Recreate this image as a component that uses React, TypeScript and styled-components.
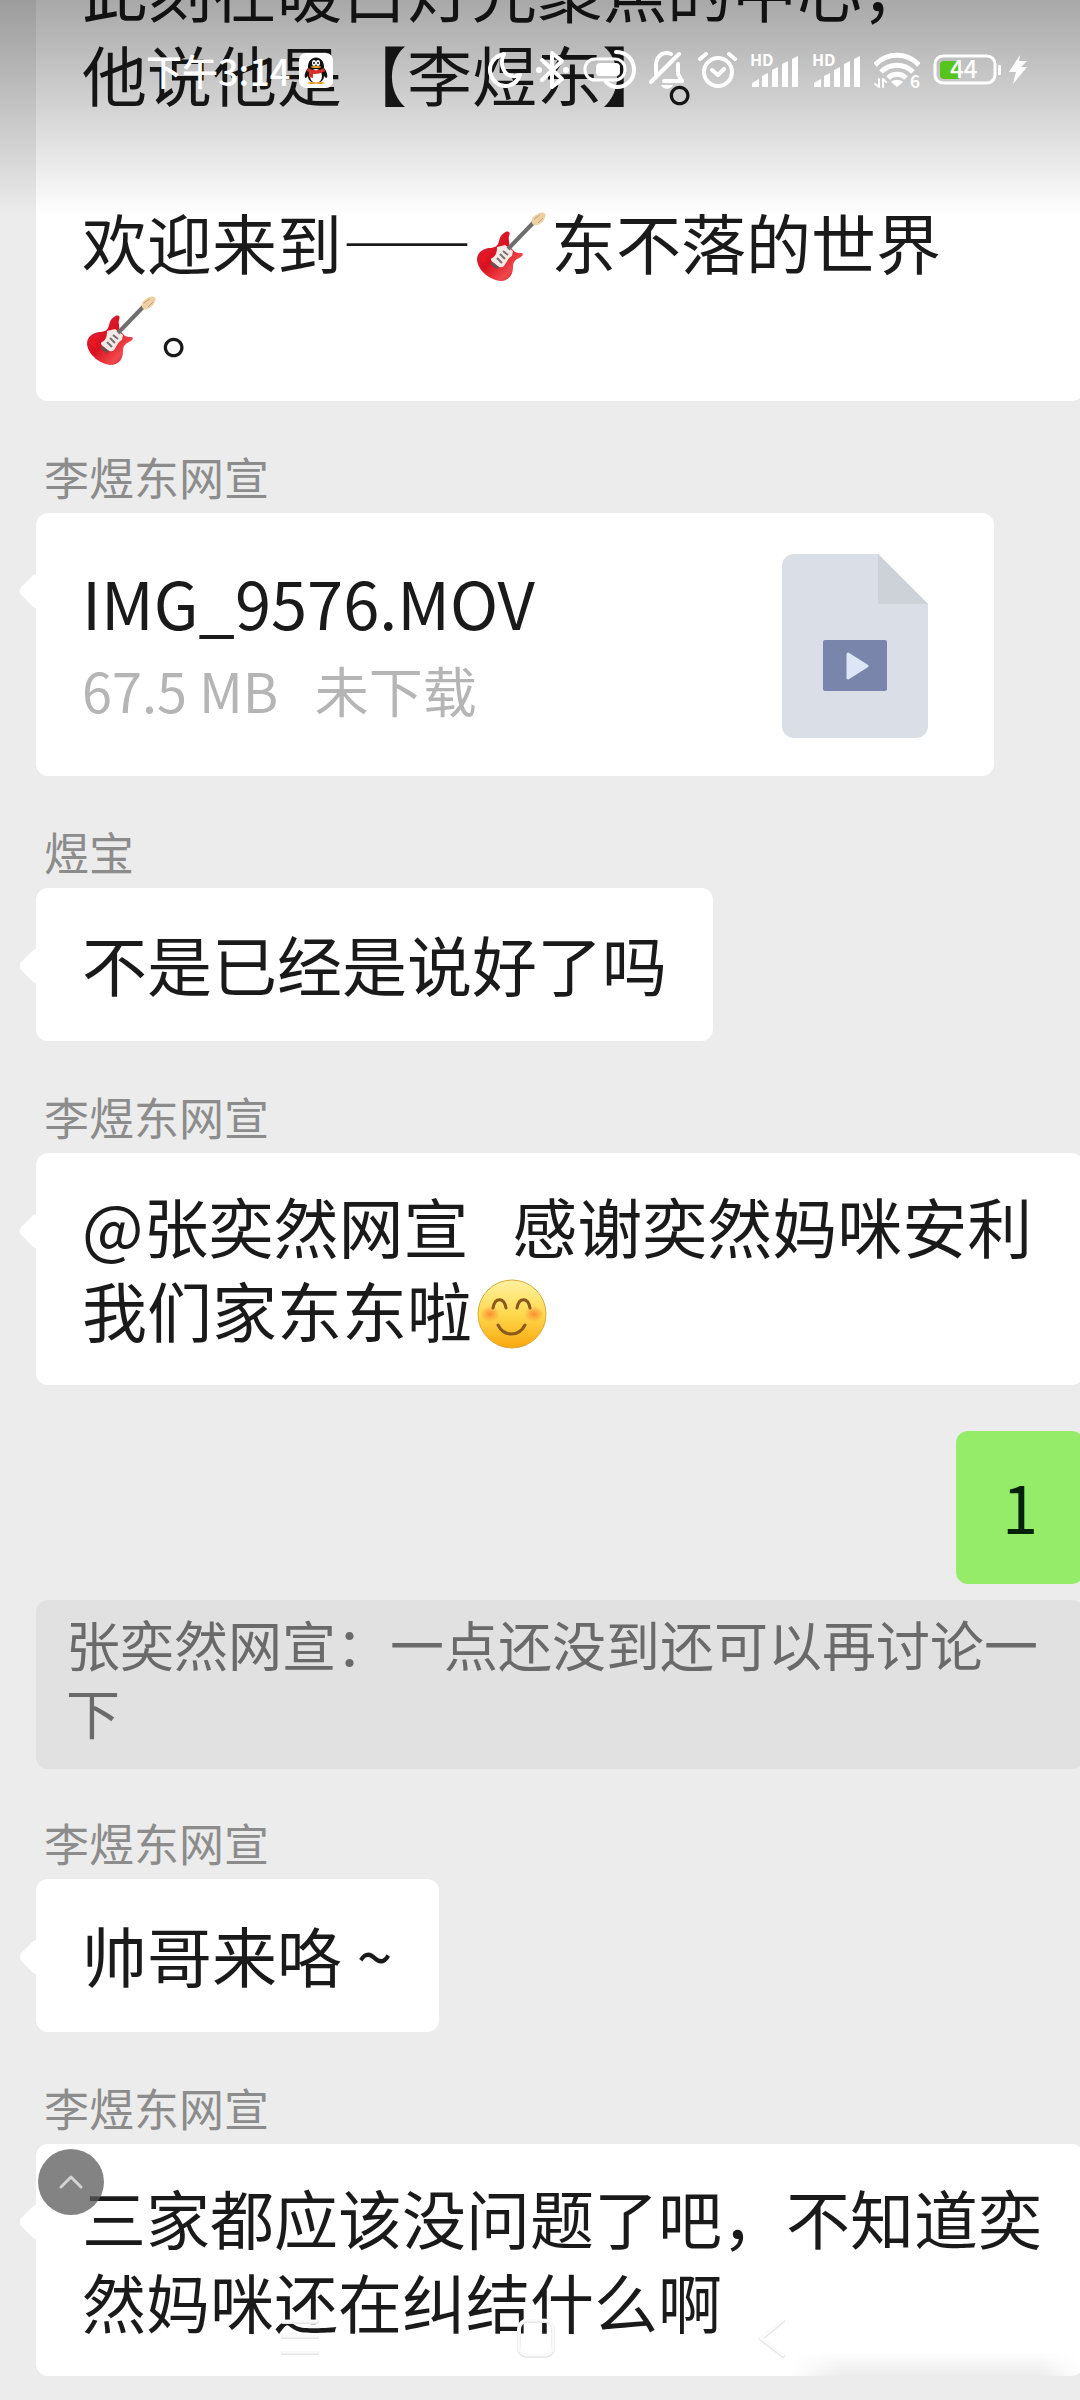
import React from "react";
import styled, { createGlobalStyle } from "styled-components";

const GlobalStyle = createGlobalStyle`
  * { box-sizing: border-box; }
  body {
    margin: 0;
    background: #ececec;
    font-family: "Noto Sans CJK SC", "Noto Sans", sans-serif;
  }
  button { padding: 0; border: 0; background: none; font: inherit; }
  svg { display: block; }
`;

const Screen = styled.main`
  position: relative;
  overflow: hidden;
  min-height: 100vh;
  background: #ececec;
  text-spacing-trim: space-all;
`;

/* The thread is scrolled part of the way down and runs past the right edge. */
const Thread = styled.ol`
  list-style: none;
  display: flex;
  flex-direction: column;
  align-items: flex-start;
  margin: -83px -4px 0 0;
  padding: 0 0 24px 36px;
`;

const Message = styled.li<{ $gap: number; $wide?: boolean }>`
  display: flex;
  flex-direction: column;
  align-items: flex-start;
  margin-top: ${(p) => p.$gap}px;
  width: ${(p) => (p.$wide ? "100%" : "auto")};
`;

const OwnMessage = styled(Message)`
  align-self: flex-end;
`;

const Sender = styled.span`
  padding-left: 8px;
  font-size: 45px;
  line-height: 72px;
  color: #8c8c8c;
`;

const Bubble = styled.div<{ $own?: boolean; $tail?: boolean; $wide?: boolean; $size?: number }>`
  position: relative;
  display: flex;
  flex-direction: column;
  justify-content: center;
  width: ${(p) => (p.$wide ? "100%" : "auto")};
  min-height: 153px;
  padding: 30px 46px 34px;
  border-radius: 12px;
  background: ${(p) => (p.$own ? "#95ec69" : "#ffffff")};
  color: ${(p) => (p.$own ? "#06210a" : "#1a1a1a")};
  font-size: ${(p) => p.$size ?? 65}px;
  line-height: 84px;
  white-space: pre;

  &::before {
    content: "";
    display: ${(p) => (p.$tail ? "block" : "none")};
    position: absolute;
    left: -13px;
    top: 64px;
    width: 28px;
    height: 28px;
    border-radius: 6px;
    background: inherit;
    transform: rotate(45deg);
  }
`;

const Line = styled.span`
  display: block;
  height: 84px;
`;

const Dash = styled.span`
  font-variant-east-asian: full-width;
`;

const FileCard = styled(Bubble)`
  flex-direction: row;
  align-items: center;
  justify-content: space-between;
  width: 958px;
  padding: 41px 66px 38px 46px;
`;

const FileText = styled.div`
  display: flex;
  flex-direction: column;
  gap: 4px;
`;

const FileMeta = styled.span`
  font-size: 54px;
  line-height: 84px;
  color: #b5b5b5;
`;

const Quote = styled.blockquote`
  width: 100%;
  margin: 0;
  padding: 10px 30px 23px;
  border-radius: 12px;
  background: #e1e1e1;
  color: #6a6a6a;
  font-size: 54px;
  line-height: 68px;
  white-space: pre;
`;

const InlineArt = styled.svg`
  display: inline-block;
  width: 70px;
  height: 70px;
  margin: 0 4px 0 5px;
  vertical-align: -12px;
`;

const StatusBar = styled.header`
  position: absolute;
  inset: 0 0 auto 0;
  display: flex;
  align-items: flex-start;
  justify-content: space-between;
  height: 216px;
  padding: 50px 52px 0 146px;
  background: linear-gradient(rgba(0, 0, 0, 0.34), rgba(0, 0, 0, 0.2) 90px, rgba(0, 0, 0, 0));
  color: #ffffff;
`;

const StatusGroup = styled.div<{ $gap: number }>`
  display: flex;
  align-items: center;
  gap: ${(p) => p.$gap}px;
  height: 40px;
`;

const Clock = styled.time`
  font-size: 36px;
  font-weight: 500;
  line-height: 40px;
`;

const ScrollUp = styled.button`
  position: absolute;
  left: 38px;
  bottom: 185px;
  display: grid;
  place-items: center;
  width: 66px;
  height: 66px;
  border-radius: 50%;
  background: rgba(90, 90, 90, 0.75);
`;

const NavBar = styled.nav`
  position: absolute;
  inset: auto 0 40px 0;
  display: flex;
  justify-content: center;
  gap: 194px;
  padding-right: 8px;
`;

const NavButton = styled.button`
  width: 42px;
  height: 44px;
`;

const Haze = styled.div`
  position: absolute;
  right: 0;
  bottom: 24px;
  width: 290px;
  height: 24px;
  background: linear-gradient(rgba(236, 236, 236, 0), #ececec);
  mask-image: linear-gradient(to right, transparent, #000 50px, #000 250px, transparent);
`;

const Guitar = () => (
  <InlineArt viewBox="0 0 70 70" role="img" aria-label="guitar">
    <defs>
      <linearGradient id="body" x1="0" y1="0" x2="1" y2="1">
        <stop offset="0" stopColor="#d8304a" />
        <stop offset="0.45" stopColor="#d9101f" />
        <stop offset="0.75" stopColor="#f0484c" />
        <stop offset="1" stopColor="#b8121c" />
      </linearGradient>
    </defs>
    <path d="M27 22c4-3 7-1 5 3-1 4 1 6 0 10l6 6c2 1 5 1 7 1 2 1 0 4-3 5-4 2-6 4-6 9 0 8-4 13-11 14C14 70 1 60 0 49c0-8 6-11 12-12 6 0 9-2 10-7 1-4 2-6 5-8z" fill="url(#body)" />
    <path d="M4 48c0-5 5-8 10-8-5 3-7 7-5 12-3 0-5-1-5-4z" fill="#ee1420" />
    <path d="M20 36l8-2 8 6-1 5c-4 2-5 6-8 10-3 3-7 0-10-3-3-2-4-4-2-5 4-2 5-6 5-11z" fill="#f3e9e6" />
    <path d="M20 47l5 5M23 43l5 5M26 40l5 4" stroke="#77706f" strokeWidth="2" />
    <path d="M14 52l7 5" stroke="#6b5150" strokeWidth="3" />
    <path d="M31 38L57 11" stroke="#6f6d6e" strokeWidth="4" />
    <path d="M55 12c-1-4 1-6 4-8 3-2 5-3 8-2 2 1 2 2 1 4-1 4-4 7-8 8-2 1-4 0-5-2z" fill="#ecd0a3" />
    <path d="M57 8l6-4M61 12l5-5" stroke="#c99f74" strokeWidth="1" />
  </InlineArt>
);

const Smile = () => (
  <InlineArt viewBox="0 0 70 70" role="img" aria-label="smiling face">
    <defs>
      <linearGradient id="face" x1="0" y1="0" x2="0" y2="1">
        <stop offset="0" stopColor="#fff2a0" />
        <stop offset="0.5" stopColor="#ffd94e" />
        <stop offset="1" stopColor="#f9a60f" />
      </linearGradient>
      <radialGradient id="blush">
        <stop offset="0" stopColor="#f77b2c" stopOpacity="0.8" />
        <stop offset="1" stopColor="#f77b2c" stopOpacity="0" />
      </radialGradient>
    </defs>
    <circle cx="35" cy="35" r="34" fill="url(#face)" stroke="#dfa93a" />
    <ellipse cx="13" cy="35" rx="10" ry="8" fill="url(#blush)" />
    <ellipse cx="57" cy="35" rx="10" ry="8" fill="url(#blush)" />
    <path d="M16 29c2-11 11-11 13 0M40 29c2-11 11-11 13 0M21 46c6 12 21 12 27 0" fill="none" stroke="#8b5a1a" strokeWidth="3" strokeLinecap="round" />
  </InlineArt>
);

const VideoFile = () => (
  <svg width="146" height="184" viewBox="0 0 146 184" aria-hidden="true">
    <path d="M12 0H96L146 50V172a12 12 0 0 1-12 12H12A12 12 0 0 1 0 172V12A12 12 0 0 1 12 0z" fill="#dadfe7" />
    <path d="M96 0L146 50H96z" fill="#cdd1d8" />
    <rect x="41" y="86" width="64" height="51" rx="2" fill="#7985ab" />
    <path d="M66 100L85 112L66 124z" fill="#dde6f6" stroke="#dde6f6" strokeWidth="3" strokeLinejoin="round" />
  </svg>
);

const Penguin = () => (
  <svg width="34" height="35" viewBox="0 0 34 35" role="img" aria-label="QQ">
    <rect width="34" height="35" rx="7" fill="#fff" />
    <path d="M9 15C8 1 26 1 25 15c4 5 4 10 2 10l-2-2c0 4-3 7-8 7s-8-3-8-7l-2 2c-2 0-2-5 2-10z" fill="#111" />
    <ellipse cx="17" cy="23" rx="6" ry="7" fill="#fff" />
    <path d="M9 15c5 3 11 3 16 0l1 3c-5 3-9 3-12 3v4l-4-1v-5l-2-1z" fill="#d5302c" />
    <ellipse cx="15" cy="10" rx="2" ry="3" fill="#fff" />
    <ellipse cx="19" cy="10" rx="2" ry="3" fill="#fff" />
    <circle cx="15" cy="10" r="1" fill="#111" />
    <circle cx="19" cy="10" r="1" fill="#111" />
    <ellipse cx="17" cy="14" rx="5" ry="1" fill="#f0a020" />
    <ellipse cx="13" cy="30" rx="4" ry="1" fill="#e89a20" />
    <ellipse cx="21" cy="30" rx="4" ry="1" fill="#e89a20" />
  </svg>
);

const line = { fill: "none", stroke: "#fff", strokeLinecap: "round", strokeLinejoin: "round" } as const;

const Moon = () => (
  <svg width="34" height="38" viewBox="0 0 34 38" aria-hidden="true">
    <path {...line} strokeWidth="4" d="M16 3C6 5 1 13 2 21c2 9 9 15 17 14 6-1 11-5 13-11-8 3-15 0-17-7-2-5-1-10 1-14z" />
  </svg>
);

const Bluetooth = () => (
  <svg width="35" height="40" viewBox="0 0 35 40" aria-hidden="true">
    <path {...line} strokeWidth="4" d="M7 10L27 29L17 37V3L27 11L7 30" />
    <circle cx="4" cy="20" r="3" fill="#fff" />
    <circle cx="31" cy="20" r="3" fill="#fff" />
  </svg>
);

const DeviceBattery = () => (
  <svg width="53" height="40" viewBox="0 0 53 40" aria-hidden="true">
    <path {...line} strokeWidth="4" d="M33 2C44 2 51 10 51 20S43 37 34 37c-5 0-8-2-11-5" />
    <rect {...line} strokeWidth="3" x="2" y="9" width="40" height="21" rx="10" />
    <rect x="13" y="13" width="24" height="13" rx="4" fill="#fff" />
  </svg>
);

const BellOff = () => (
  <svg width="36" height="40" viewBox="0 0 36 40" aria-hidden="true">
    <path {...line} strokeWidth="4" d="M2 32L30 4M7 24V14C8 5 15 1 22 4M29 14v10l4 7H15" />
    <path d="M12 35h12c-2 5-10 5-12 0z" fill="#fff" />
  </svg>
);

const Alarm = () => (
  <svg width="39" height="38" viewBox="0 0 39 38" aria-hidden="true">
    <circle {...line} strokeWidth="4" cx="20" cy="21" r="14" />
    <path {...line} strokeWidth="4" d="M14 19l6 5 6-6M2 8l6-5M37 8l-6-5" />
  </svg>
);

const Signal = () => (
  <svg width="49" height="36" viewBox="0 0 49 36" aria-label="HD signal" role="img">
    <text x="0" y="14" fontSize="16" fontWeight="700" fill="#fff">HD</text>
    <path d="M2 35v-4l7-4v8zM12 35V24l6-3v14zM22 35V18l6-3v20zM32 35V12l6-3v26zM42 35V7l6-3v31z" fill="#fff" />
  </svg>
);

const Wifi = () => (
  <svg width="46" height="38" viewBox="0 0 46 38" aria-label="Wi-Fi 6" role="img">
    <path {...line} strokeLinecap="butt" strokeWidth="5" d="M1 14C13 1 33 1 45 14M7 21C16 12 30 12 39 21M14 27C19 22 27 22 32 27" />
    <path d="M17 31c4-3 8-3 12 0l-6 5z" fill="#fff" />
    <path {...line} strokeWidth="2" d="M5 28v8l-4-3M9 36v-8l3 3" />
    <text x="36" y="37" fontSize="17" fontWeight="700" fill="#fff">6</text>
  </svg>
);

const Battery = () => (
  <svg width="95" height="32" viewBox="0 0 95 32" aria-label="Battery 44 percent, charging" role="img">
    <rect x="2" y="2" width="60" height="27" rx="8" fill="none" stroke="#fff" strokeWidth="3" />
    <path d="M11 7h15v18H11a4 4 0 0 1-4-4V11a4 4 0 0 1 4-4z" fill="#56c41d" />
    <text x="17" y="24" fontSize="24" fontWeight="500" fill="#fff">44</text>
    <rect x="65" y="11" width="3" height="10" rx="1" fill="#fff" />
    <path d="M87 1L76 18h7l-3 12 14-17h-6l6-6h-8z" fill="#fff" />
  </svg>
);

const NavIcon = ({ d }: { d: string }) => (
  <svg width="42" height="44" viewBox="0 0 42 44" aria-hidden="true">
    <path {...line} stroke="#e6e6e6" strokeWidth="4" d={d} transform="translate(0 1)" />
    <path {...line} strokeWidth="3" strokeOpacity="0.8" d={d} />
  </svg>
);

const navItems = [
  { label: "Recent apps", d: "M4 5H38M4 20H38M4 36H38" },
  { label: "Home", d: "M12 4H30a8 8 0 0 1 8 8V31a8 8 0 0 1-8 8H12a8 8 0 0 1-8-8V12a8 8 0 0 1 8-8z" },
  { label: "Back", d: "M32 4L10 22L32 39" },
];

export default function App() {
  return (
    <>
      <GlobalStyle />
      <Screen lang="zh-CN">
        <Thread>
          <Message $gap={0} $wide>
            <Bubble $wide>
              <Line>{"此刻在暖白灯光聚焦的中心\uFF0C"}</Line>
              <Line>他说他是【李煜东】。</Line>
              <Line>{" "}</Line>
              <Line>欢迎来到<Dash>——</Dash><Guitar />东不落的世界</Line>
              <Line><Guitar />。</Line>
            </Bubble>
          </Message>

          <Message $gap={40}>
            <Sender>李煜东网宣</Sender>
            <FileCard $tail>
              <FileText>
                <span>IMG_9576.MOV</span>
                <FileMeta>67.5 MB{"   "}未下载</FileMeta>
              </FileText>
              <VideoFile />
            </FileCard>
          </Message>

          <Message $gap={40}>
            <Sender>煜宝</Sender>
            <Bubble $tail>不是已经是说好了吗</Bubble>
          </Message>

          <Message $gap={40} $wide>
            <Sender>李煜东网宣</Sender>
            <Bubble $tail $wide>
              <Line>@张奕然网宣{"   "}感谢奕然妈咪安利</Line>
              <Line>我们家东东啦<Smile /></Line>
            </Bubble>
          </Message>

          <OwnMessage $gap={46}>
            <Bubble $own>1</Bubble>
          </OwnMessage>

          <Message $gap={16} $wide>
            <Quote>{"张奕然网宣\uFF1A一点还没到还可以再讨论一\n下"}</Quote>
          </Message>

          <Message $gap={38}>
            <Sender>李煜东网宣</Sender>
            <Bubble $tail>帅哥来咯 ~</Bubble>
          </Message>

          <Message $gap={40} $wide>
            <Sender>李煜东网宣</Sender>
            <Bubble $tail $wide $size={64}>
              <Line>{"三家都应该没问题了吧\uFF0C不知道奕"}</Line>
              <Line>然妈咪还在纠结什么啊</Line>
            </Bubble>
          </Message>
        </Thread>

        <Haze />

        <StatusBar>
          <StatusGroup $gap={9}>
            <Clock>下午3:14</Clock>
            <Penguin />
          </StatusGroup>
          <StatusGroup $gap={13}>
            <Moon />
            <Bluetooth />
            <DeviceBattery />
            <BellOff />
            <Alarm />
            <Signal />
            <Signal />
            <Wifi />
            <Battery />
          </StatusGroup>
        </StatusBar>

        <ScrollUp aria-label="Scroll up">
          <svg width="26" height="16" viewBox="0 0 26 16" aria-hidden="true">
            <path d="M3 13L13 3L23 13" fill="none" stroke="#d2d2d2" strokeWidth="3" strokeLinecap="round" strokeLinejoin="round" />
          </svg>
        </ScrollUp>

        <NavBar>
          {navItems.map((item) => (
            <NavButton key={item.label} aria-label={item.label}>
              <NavIcon d={item.d} />
            </NavButton>
          ))}
        </NavBar>
      </Screen>
    </>
  );
}
